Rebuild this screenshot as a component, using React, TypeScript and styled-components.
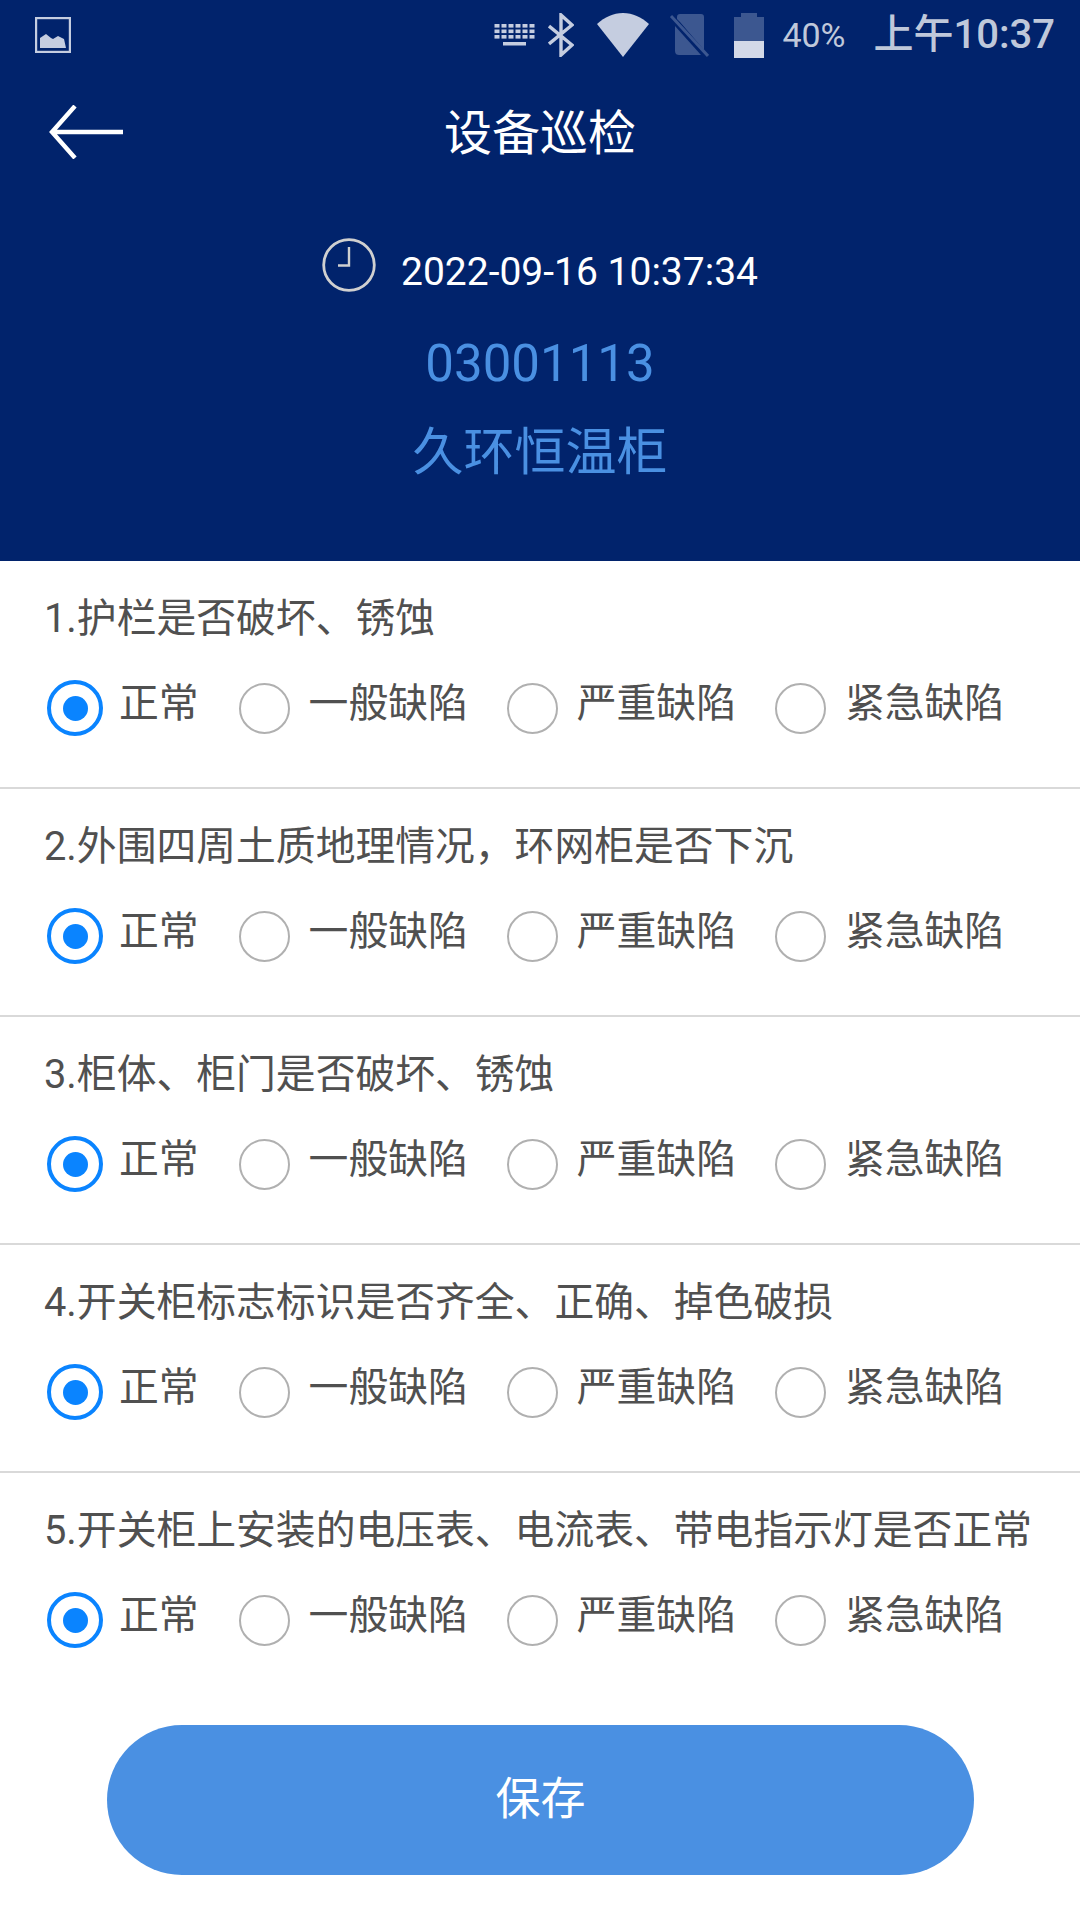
import React from "react";
import styled, { createGlobalStyle } from "styled-components";

const GlobalStyle = createGlobalStyle`
  html, body {
    margin: 0;
    padding: 0;
    background: #ffffff;
    font-family: Roboto, "Noto Sans CJK SC", sans-serif;
  }
  * {
    box-sizing: border-box;
  }
`;

const Page = styled.div`
  width: 1080px;
  height: 1920px;
  display: flex;
  flex-direction: column;
  background: #ffffff;
  overflow: hidden;
`;

const Header = styled.header`
  height: 561px;
  background: #01236c;
  display: flex;
  flex-direction: column;
`;

const StatusBar = styled.div`
  height: 70px;
  padding: 0 25px 0 35px;
  display: flex;
  align-items: center;
  justify-content: space-between;
  color: rgba(255, 255, 255, 0.77);
`;

const StatusRight = styled.div`
  display: flex;
  align-items: center;
`;

const StatusIcon = styled.svg<{ $mr: number }>`
  display: block;
  margin-right: ${(p) => p.$mr}px;
`;

const Percent = styled.span`
  font-size: 34px;
  margin-right: 28px;
`;

const Clock = styled.span`
  font-size: 40px;
  font-weight: 500;
  line-height: 70px;
`;

const NavBar = styled.div`
  height: 124px;
  padding: 4px 49px 0;
  display: grid;
  grid-template-columns: 1fr auto 1fr;
  align-items: center;
`;

const BackButton = styled.svg`
  display: block;
  margin-top: -4px;
`;

const Title = styled.h1`
  margin: 0;
  font-size: 48px;
  font-weight: 400;
  color: #ffffff;
  line-height: 60px;
`;

const TimeRow = styled.div`
  margin-top: 48px;
  height: 60px;
  display: flex;
  align-items: center;
  justify-content: center;
  gap: 25px;
  color: #ffffff;
  font-size: 39px;
`;

const TimeIcon = styled.svg`
  display: block;
  margin-bottom: 14px;
`;

const Code = styled.div`
  margin-top: 32px;
  font-size: 51px;
  line-height: 60px;
  text-align: center;
  color: #4a90e2;
`;

const DeviceName = styled.div`
  margin-top: 29px;
  font-size: 51px;
  line-height: 60px;
  text-align: center;
  color: #4a90e2;
`;

const Question = styled.section<{ $last?: boolean }>`
  height: 228px;
  padding: 30px 0 0 44px;
  border-bottom: ${(p) => (p.$last ? "none" : "2px solid #d9d9d9")};
`;

const QuestionText = styled.div`
  font-size: 39.8px;
  line-height: 56px;
  color: #505050;
  white-space: nowrap;
`;

const Options = styled.div`
  margin-top: 33px;
  display: flex;
  align-items: center;
`;

const Option = styled.label<{ $selected?: boolean }>`
  display: flex;
  align-items: center;
  gap: ${(p) => (p.$selected ? "16px" : "19px")};
  margin-right: ${(p) => (p.$selected ? "40px" : "39px")};
  font-size: 39.8px;
  line-height: 56px;
  color: #505050;
`;

const OptionLabel = styled.span`
  position: relative;
  top: -4px;
`;

const Radio = styled.span<{ $selected?: boolean }>`
  width: ${(p) => (p.$selected ? "56px" : "51px")};
  height: ${(p) => (p.$selected ? "56px" : "51px")};
  margin-left: ${(p) => (p.$selected ? "3px" : "0")};
  border-radius: 50%;
  border: ${(p) => (p.$selected ? "4px solid #0a84ff" : "2px solid #b0b0b0")};
  display: flex;
  align-items: center;
  justify-content: center;
  flex-shrink: 0;
`;

const RadioDot = styled.span`
  width: 25px;
  height: 25px;
  border-radius: 50%;
  background: #0a84ff;
`;

const SaveButton = styled.button`
  width: 867px;
  height: 150px;
  margin: 24px 0 0 107px;
  padding: 0 0 10px;
  border: none;
  border-radius: 75px;
  background: #4a90e2;
  color: #ffffff;
  font-family: inherit;
  font-size: 45px;
`;

const QUESTIONS = [
  "1.护栏是否破坏、锈蚀",
  "2.外围四周土质地理情况，环网柜是否下沉",
  "3.柜体、柜门是否破坏、锈蚀",
  "4.开关柜标志标识是否齐全、正确、掉色破损",
  "5.开关柜上安装的电压表、电流表、带电指示灯是否正常",
];

const LEVELS = ["正常", "一般缺陷", "严重缺陷", "紧急缺陷"];

const KeyboardIcon = () => (
  <StatusIcon $mr={13} width="41" height="24" viewBox="0 0 41 24" style={{ filter: "blur(0.6px)" }}>
    {[0, 1, 2].map((row) =>
      [0, 1, 2, 3, 4, 5].map((col) => (
        <rect key={`${row}-${col}`} x={col * 7 + 0.5} y={row * 5.5 + 1} width="5" height="3.6" fill="#c5cde0" />
      ))
    )}
    <rect x="9" y="19" width="23" height="3.5" fill="#c5cde0" />
  </StatusIcon>
);

export default function App() {
  return (
    <Page>
      <GlobalStyle />
      <Header>
        <StatusBar>
          <svg width="36" height="36" viewBox="0 0 36 36">
            <rect x="1" y="1" width="34" height="34" fill="none" stroke="#c5cde0" strokeWidth="2.4" />
            <path d="M5 31V21l6-4 5 4 2 1 5-3 6 3 2 9z" fill="#c5cde0" />
          </svg>
          <StatusRight>
            <KeyboardIcon />
            <StatusIcon $mr={23} width="26" height="44" viewBox="0 0 26 44">
              <path d="M1 13l23 19-11 10V2l11 10L1 31" fill="none" stroke="#c5cde0" strokeWidth="3.4" />
            </StatusIcon>
            <StatusIcon $mr={20} width="52" height="44" viewBox="0 0 52 44">
              <path d="M0 11C8 4 16 0 26 0s18 4 26 11L26 44z" fill="#c5cde0" />
            </StatusIcon>
            <StatusIcon $mr={25} width="40" height="44" viewBox="0 0 38 44">
              <path d="M7 4c0-2 1-3 3-3h21c2 0 3 1 3 3v33L10 9 7 6z" fill="#3c5790" />
              <path d="M5 13l26 29H9c-2 0-4-1-4-4z" fill="#3c5790" />
              <path d="M1 3l37 40" stroke="#3c5790" strokeWidth="3" />
            </StatusIcon>
            <StatusIcon $mr={18} width="30" height="46" viewBox="0 0 30 46">
              <path d="M7 1h16v4h7v41H0V5h7z" fill="#3c5790" />
              <rect x="0" y="29" width="30" height="17" fill="#d3d9e8" />
            </StatusIcon>
            <Percent>40%</Percent>
            <Clock>上午10:37</Clock>
          </StatusRight>
        </StatusBar>
        <NavBar>
          <BackButton width="74" height="54" viewBox="0 0 74 54">
            <path d="M26 1L3 27l23 26M3 27h71" fill="none" stroke="#ffffff" strokeWidth="4.4" />
          </BackButton>
          <Title>设备巡检</Title>
        </NavBar>
        <TimeRow>
          <TimeIcon width="54" height="54" viewBox="0 0 54 54">
            <circle cx="27" cy="27" r="25.3" fill="none" stroke="#d0d0d0" strokeWidth="2.8" />
            <path d="M27 9v18.500H16" fill="none" stroke="#d0d0d0" strokeWidth="2.4" />
          </TimeIcon>
          <span>2022-09-16 10:37:34</span>
        </TimeRow>
        <Code>03001113</Code>
        <DeviceName>久环恒温柜</DeviceName>
      </Header>
      {QUESTIONS.map((text, i) => (
        <Question key={text} $last={i === QUESTIONS.length - 1}>
          <QuestionText>{text}</QuestionText>
          <Options>
            {LEVELS.map((level, j) => (
              <Option key={level} $selected={j === 0}>
                <Radio $selected={j === 0}>{j === 0 && <RadioDot />}</Radio>
                <OptionLabel>{level}</OptionLabel>
              </Option>
            ))}
          </Options>
        </Question>
      ))}
      <SaveButton>保存</SaveButton>
    </Page>
  );
}
